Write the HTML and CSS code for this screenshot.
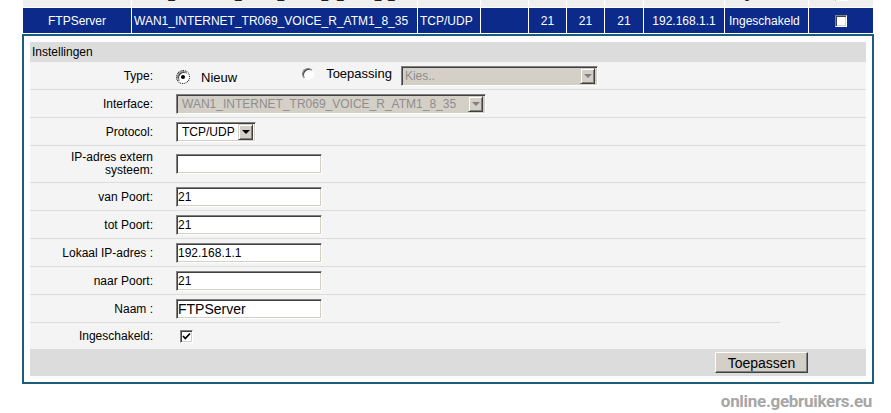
FILE: index.html
```html
<!DOCTYPE html>
<html lang="nl">
<head>
  <meta charset="UTF-8" />
  <meta name="viewport" content="width=device-width, initial-scale=1.0">
  <title>Poort doorsturen</title>
  <link rel="stylesheet" href="styles.css">
</head>
<body>
<div class="wrap">

  <!-- lijst met regels -->
  <table class="rules">
    <colgroup>
      <col class="c-name"><col class="c-iface"><col class="c-proto"><col class="c-ext">
      <col class="c-port"><col class="c-port"><col class="c-port2">
      <col class="c-ip"><col class="c-state"><col class="c-chk">
    </colgroup>
    <tr class="prev">
      <td class="mid">Telnet</td>
      <td>WAN1_INTERNET_TR069_VOICE_R_ATM1_8_35</td>
      <td>TCP</td>
      <td></td>
      <td class="mid">23</td>
      <td class="mid">23</td>
      <td class="mid">23</td>
      <td class="mid">192.168.1.2</td>
      <td class="state">Uitgeschakeld</td>
      <td class="mid"><span class="chk"></span></td>
    </tr>
    <tr class="sel">
      <td class="mid">FTPServer</td>
      <td>WAN1_INTERNET_TR069_VOICE_R_ATM1_8_35</td>
      <td>TCP/UDP</td>
      <td></td>
      <td class="mid">21</td>
      <td class="mid">21</td>
      <td class="mid">21</td>
      <td class="mid">192.168.1.1</td>
      <td class="state">Ingeschakeld</td>
      <td class="mid"><span class="chk"></span></td>
    </tr>
  </table>

  <!-- bewerken van de geselecteerde regel -->
  <div class="panel">
    <div class="form">
      <div class="form-head">Instellingen</div>

      <div class="row">
        <div class="label">Type:</div>
        <div class="field">
          <span class="opt opt-new"><span class="radio checked focus"></span>Nieuw</span>
          <span class="opt opt-app"><span class="radio"></span>Toepassing</span>
          <span class="dropdown disabled kies"><span class="dd-text">Kies..</span><span class="dd-btn"></span></span>
        </div>
      </div>

      <div class="row">
        <div class="label">Interface:</div>
        <div class="field">
          <span class="dropdown disabled iface"><span class="dd-text">WAN1_INTERNET_TR069_VOICE_R_ATM1_8_35</span><span class="dd-btn"></span></span>
        </div>
      </div>

      <div class="row">
        <div class="label">Protocol:</div>
        <div class="field">
          <span class="dropdown proto"><span class="dd-text">TCP/UDP</span><span class="dd-btn"></span></span>
        </div>
      </div>

      <div class="row row-tall">
        <div class="label">IP-adres extern<br>systeem:</div>
        <div class="field"><input type="text" class="input" value=""></div>
      </div>

      <div class="row">
        <div class="label">van Poort:</div>
        <div class="field"><input type="text" class="input" value="21"></div>
      </div>

      <div class="row">
        <div class="label">tot Poort:</div>
        <div class="field"><input type="text" class="input" value="21"></div>
      </div>

      <div class="row">
        <div class="label">Lokaal IP-adres :</div>
        <div class="field"><input type="text" class="input" value="192.168.1.1"></div>
      </div>

      <div class="row">
        <div class="label">naar Poort:</div>
        <div class="field"><input type="text" class="input" value="21"></div>
      </div>

      <div class="row row-short-line">
        <div class="label">Naam :</div>
        <div class="field"><input type="text" class="input input-name" value="FTPServer"></div>
      </div>

      <div class="row row-last">
        <div class="label">Ingeschakeld:</div>
        <div class="field">
          <span class="chk checked">
            <svg width="9" height="9" viewBox="0 0 9 9"><path d="M1 4 L3.3 6.5 L8 1.5" fill="none" stroke="#000" stroke-width="1.8"/></svg>
          </span>
        </div>
      </div>

      <div class="form-foot">
        <button type="button" class="btn">Toepassen</button>
      </div>
    </div>
  </div>

  <div class="mark">online.gebruikers.eu</div>
</div>
</body>
</html>
```

FILE: styles.css
```css
body {
  margin: 0;
  background: #fff;
  font-family: "Liberation Sans", Arial, sans-serif;
  font-size: 12px;
  color: #000;
}

.wrap {
  margin-left: 22px;
  width: 852px;
}

/* tabel met regels, de vorige regel valt grotendeels boven de rand */
.rules {
  width: 852px;
  table-layout: fixed;
  border-collapse: separate;
  border-spacing: 1px;
  background: #fff;
  margin-top: -19px;
  font-size: 12px;
}
.rules td {
  height: 25px;
  padding: 0 2px;
  white-space: nowrap;
  overflow: hidden;
}
.c-name { width: 108px; }
.c-iface { width: 285px; }
.c-proto { width: 62px; }
.c-ext { width: 47px; }
.c-port { width: 37px; }
.c-port2 { width: 38px; }
.c-ip { width: 80px; }
.c-state { width: 83px; }
.c-chk { width: 64px; }

.rules .mid { text-align: center; }
.rules .state { padding-left: 4px; }

.prev td {
  height: 19px;
  background: #efefef;
  vertical-align: bottom;
  padding-bottom: 6px;
}
.sel td {
  background: #0b2a8a;
  color: #fff;
}

.chk {
  display: inline-block;
  width: 13px;
  height: 13px;
  box-sizing: border-box;
  background: #fff;
  border: 1px solid;
  border-color: #808080 #fff #fff #808080;
  box-shadow: inset 1px 1px 0 #404040, inset -1px -1px 0 #d4d0c8;
  vertical-align: middle;
}
.chk svg { display: block; margin: 1px 0 0 1px; }
.sel .chk { width: 12px; height: 12px; }

/* paneel */
.panel {
  border: 2px solid #1d5d7c;
  padding: 6px;
  background: #fff;
}
.form { background: #f4f4f4; }

.form-head {
  background: #dcdcdc;
  height: 20px;
  line-height: 20px;
  padding-left: 2px;
}

.row {
  display: flex;
  align-items: center;
  height: 28px;
  box-sizing: border-box;
  border-bottom: 1px solid #dcdcdc;
}
.row-tall { height: 37px; }
.row-tall .label { line-height: 13px; }
.row-short-line {
  border-bottom: none;
  background: linear-gradient(#dcdcdc, #dcdcdc) no-repeat left bottom / 750px 1px, #f4f4f4;
}
.row-last {
  height: 26px;
  border-bottom: none;
}

.label {
  width: 123px;
  padding-right: 23px;
  text-align: right;
  flex: none;
}
.field {
  display: flex;
  align-items: center;
}

/* keuzerondjes */
.opt {
  display: inline-flex;
  align-items: center;
  gap: 12px;
  font-size: 13px;
}
.opt-new { margin-left: 1px; margin-top: 3px; }
.opt-app { margin-left: 65px; margin-bottom: 4px; }

.radio {
  display: inline-block;
  position: relative;
  width: 12px;
  height: 12px;
  box-sizing: border-box;
  border-radius: 50%;
  background: #fff;
  border: 1px solid;
  border-color: #808080 #fff #fff #808080;
  box-shadow: inset 1px 1px 0 #404040;
}
.radio.checked::after {
  content: "";
  position: absolute;
  left: 3px;
  top: 3px;
  width: 4px;
  height: 4px;
  border-radius: 50%;
  background: #000;
}
.radio.focus { outline: 1px dotted #000; outline-offset: 0; }

/* keuzelijsten */
.dropdown {
  display: inline-flex;
  align-items: center;
  height: 20px;
  box-sizing: border-box;
  border: 1px solid;
  border-color: #808080 #fff #fff #808080;
  box-shadow: inset 1px 1px 0 #404040, inset -1px -1px 0 #d4d0c8;
  background: #fff;
  padding: 2px 2px 2px 5px;
}
.dd-text {
  flex: 1;
  white-space: nowrap;
  overflow: hidden;
}
.dd-btn {
  position: relative;
  width: 15px;
  height: 16px;
  box-sizing: border-box;
  background: #d4d0c8;
  border: 1px solid;
  border-color: #d4d0c8 #404040 #404040 #d4d0c8;
  box-shadow: inset 1px 1px 0 #fff, inset -1px -1px 0 #808080;
  flex: none;
}
.dd-btn::after {
  content: "";
  position: absolute;
  left: 3px;
  top: 5px;
  border-left: 4px solid transparent;
  border-right: 4px solid transparent;
  border-top: 4px solid #000;
}
.dropdown.disabled { background: #d4d0c8; color: #8e8e8e; }
.dropdown.disabled .dd-btn::after { border-top-color: #808080; }

.kies { width: 197px; margin-left: 9px; padding-left: 3px; }
.iface { width: 310px; }
.proto { width: 80px; padding-left: 5px; }

/* tekstvelden */
.input {
  width: 146px;
  height: 20px;
  box-sizing: border-box;
  margin: 0;
  padding: 0 1px;
  border: 1px solid;
  border-color: #808080 #fff #fff #808080;
  box-shadow: inset 1px 1px 0 #404040, inset -1px -1px 0 #d4d0c8;
  background: #fff;
  font-family: "Liberation Sans", Arial, sans-serif;
  font-size: 12px;
  color: #000;
}
.input-name { font-size: 14px; }

.row-last .chk { margin-left: 4px; }

.form-foot {
  display: flex;
  align-items: center;
  justify-content: flex-end;
  height: 27px;
  background: #dcdcdc;
  padding-right: 58px;
}

.btn {
  width: 93px;
  height: 21px;
  padding: 0;
  background: #d4d0c8;
  border: 1px solid;
  border-color: #fff #404040 #404040 #fff;
  box-shadow: inset -1px -1px 0 #808080;
  font-family: "Liberation Sans", Arial, sans-serif;
  font-size: 14px;
  color: #000;
}

.mark {
  margin-top: 7px;
  padding-right: 2px;
  text-align: right;
  font-family: Roboto, "Liberation Sans", sans-serif;
  font-weight: bold;
  font-size: 17px;
  letter-spacing: -0.3px;
  color: #a6a6a6;
}
```
